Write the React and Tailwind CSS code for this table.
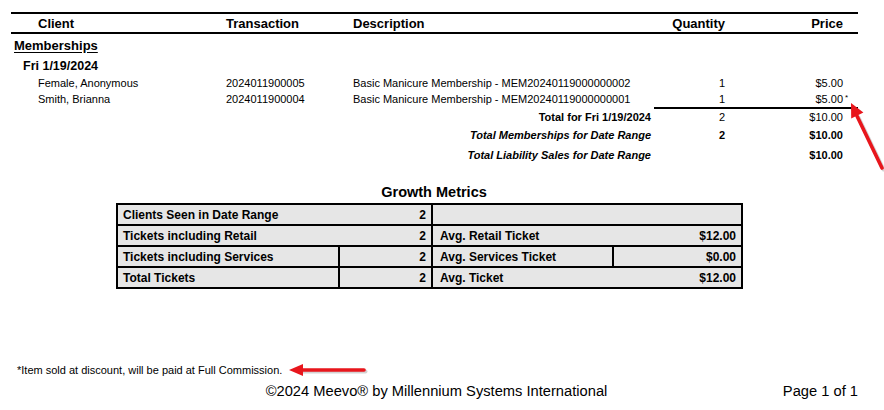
import React from 'react';

const font = { fontFamily: '"Liberation Sans", Arial, sans-serif' };
const cols = 'grid grid-cols-[215px_127px_307px_65px_118px] items-center';

const items = [
  { client: 'Female, Anonymous', tx: '2024011900005', desc: 'Basic Manicure Membership - MEM20240119000000002', qty: '1', price: '$5.00' },
  { client: 'Smith, Brianna', tx: '2024011900004', desc: 'Basic Manicure Membership - MEM20240119000000001', qty: '1', price: '$5.00', discount: true },
];

const Cell = ({ span, children, className = '' }) => (
  <div
    className={`bg-[#e6e6e6] h-[19px] flex items-center justify-between px-[5px] ${
      span ? 'col-span-2' : ''
    } ${className}`}
  >
    {children}
  </div>
);

const App = () => {
  return (
    <div className="relative w-[884px] h-[410px] bg-white text-black overflow-hidden" style={font}>
      <div className="pt-[12px] ml-[11px] w-[847px]">
        {/* column headers */}
        <div className={`${cols} h-[22px] border-y-2 border-black text-[13px] font-bold`}>
          <div className="pl-[27px]">Client</div>
          <div>Transaction</div>
          <div>Description</div>
          <div className="text-right">Quantity</div>
          <div className="text-right">Price</div>
        </div>

        <div className="h-[23px] flex items-center pl-[3px] text-[13px] font-bold underline underline-offset-2">
          Memberships
        </div>
        <div className="h-[18px] flex items-center pl-[12px] text-[12.5px] font-bold">Fri 1/19/2024</div>

        {items.map((it) => (
          <div key={it.tx} className={`${cols} h-[16px] text-[11px]`}>
            <div className="pl-[27px]">{it.client}</div>
            <div>{it.tx}</div>
            <div>{it.desc}</div>
            <div className="text-right">{it.qty}</div>
            <div className="text-right relative">
              {it.price}
              {it.discount && <span className="absolute left-full top-[2px] pl-[2px] text-[8px] leading-[10px]">*</span>}
            </div>
          </div>
        ))}
        <div className="ml-[643px] h-[2px] bg-black" />

        <div className={`${cols} h-[16px] text-[11px]`}>
          <div className="col-span-3 text-right pr-[9px] font-bold">Total for Fri 1/19/2024</div>
          <div className="text-right">2</div>
          <div className="text-right">$10.00</div>
        </div>
        <div className={`${cols} h-[21px] text-[11px] font-bold`}>
          <div className="col-span-3 text-right pr-[9px] italic">Total Memberships for Date Range</div>
          <div className="text-right">2</div>
          <div className="text-right">$10.00</div>
        </div>
        <div className={`${cols} h-[19px] text-[11px] font-bold`}>
          <div className="col-span-3 text-right pr-[9px] italic">Total Liability Sales for Date Range</div>
          <div />
          <div className="text-right">$10.00</div>
        </div>
      </div>

      {/* growth metrics */}
      <div className="mt-[18px] h-[20px] flex items-center justify-center pr-[16px] text-[14.5px] font-bold">
        Growth Metrics
      </div>
      <div className="ml-[116px] w-[627px] grid grid-cols-[220px_91px_179px_127px] gap-[2px] p-[2px] bg-black text-[12px] font-bold">
        <Cell span>
          <span>Clients Seen in Date Range</span>
          <span>2</span>
        </Cell>
        <Cell span />
        <Cell span>
          <span>Tickets including Retail</span>
          <span>2</span>
        </Cell>
        <Cell span className="pl-[7px]">
          <span>Avg. Retail Ticket</span>
          <span>$12.00</span>
        </Cell>
        <Cell>Tickets including Services</Cell>
        <Cell className="justify-end">2</Cell>
        <Cell className="pl-[7px]">Avg. Services Ticket</Cell>
        <Cell className="justify-end">$0.00</Cell>
        <Cell>Total Tickets</Cell>
        <Cell className="justify-end">2</Cell>
        <Cell span className="pl-[7px]">
          <span>Avg. Ticket</span>
          <span>$12.00</span>
        </Cell>
      </div>

      {/* footer */}
      <div className="mt-[73px] h-[16px] flex items-center pl-[17px] text-[11px]">
        *Item sold at discount, will be paid at Full Commission.
      </div>
      <div className="mt-[2px] ml-[11px] w-[847px] h-[20px] grid grid-cols-[1fr_auto_1fr] items-center text-[14.7px]">
        <div />
        <div className="pl-[4px]">©2024 Meevo® by Millennium Systems International</div>
        <div className="text-right">Page 1 of 1</div>
      </div>

      {/* red annotation arrows */}
      <svg className="absolute inset-0 pointer-events-none" width="884" height="410" viewBox="0 0 884 410">
        <g opacity="0.25" transform="translate(1.5 1.5)">
          <line x1="300" y1="370" x2="364" y2="370" stroke="#555" strokeWidth="4" strokeLinecap="round" />
          <line x1="857" y1="116" x2="882" y2="168" stroke="#555" strokeWidth="4" strokeLinecap="round" />
        </g>
        <line x1="300" y1="370" x2="364" y2="370" stroke="#e8161c" strokeWidth="3.6" strokeLinecap="round" />
        <polygon points="289,370 303,364 303,376" fill="#e8161c" />
        <line x1="857" y1="116" x2="882" y2="168" stroke="#e8161c" strokeWidth="3.6" strokeLinecap="round" />
        <polygon points="851,103 863.4,112.6 851.2,118.6" fill="#e8161c" />
      </svg>
    </div>
  );
};

export default App;
